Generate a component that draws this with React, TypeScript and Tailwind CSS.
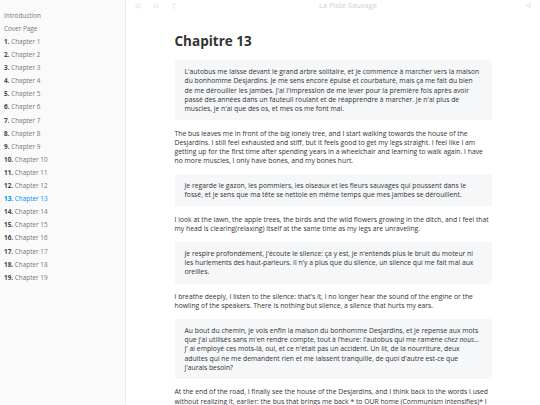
import React from "react";
import { AlignJustify, Search, Type, Share2 } from "lucide-react";

const chapters = Array.from({ length: 19 }, (_, i) => i + 1);
const active = 13;

type Block = { quote: boolean; text: React.ReactNode };

const blocks: Block[] = [
  {
    quote: true,
    text: " L'autobus me laisse devant le grand arbre solitaire, et je commence à marcher vers la maison du bonhomme Desjardins. Je me sens encore épuisé et courbaturé, mais ça me fait du bien de me dérouiller les jambes. J'ai l'impression de me lever pour la première fois après avoir passé des années dans un fauteuil roulant et de réapprendre à marcher. Je n'ai plus de muscles, je n'ai que des os, et mes os me font mal.",
  },
  {
    quote: false,
    text: " The bus leaves me in front of the big lonely tree, and I start walking towards the house of the Desjardins. I still feel exhausted and stiff, but it feels good to get my legs straight. I feel like I am getting up for the first time after spending years in a wheelchair and learning to walk again. I have no more muscles, I only have bones, and my bones hurt.",
  },
  {
    quote: true,
    text: " Je regarde le gazon, les pommiers, les oiseaux et les fleurs sauvages qui poussent dans le fossé, et je sens que ma tête se nettoie en même temps que mes jambes se dérouillent.",
  },
  {
    quote: false,
    text: " I look at the lawn, the apple trees, the birds and the wild flowers growing in the ditch, and I feel that my head is clearing(relaxing) itself at the same time as my legs are unraveling.",
  },
  {
    quote: true,
    text: " Je respire profondément, j'écoute le silence: ça y est, je n'entends plus le bruit du moteur ni les hurlements des haut-parleurs. Il n'y a plus que du silence, un silence qui me fait mal aux oreilles.",
  },
  {
    quote: false,
    text: " I breathe deeply, I listen to the silence: that's it, I no longer hear the sound of the engine or the howling of the speakers. There is nothing but silence, a silence that hurts my ears.",
  },
  {
    quote: true,
    text: (
      <>
        {" Au bout du chemin, je vois enfin la maison du bonhomme Desjardins, et je repense aux mots que j'ai utilisés sans m'en rendre compte, tout à l'heure: l'autobus qui me ramène "}
        <em>chez nous...</em>
        {" J' ai employé ces mots-là, oui, et ce n'était pas un accident. Un lit, de la nourriture, deux adultes qui ne me demandent rien et me laissent tranquille, de quoi d'autre est-ce que j'aurais besoin?"}
      </>
    ),
  },
  {
    quote: false,
    text: " At the end of the road, I finally see the house of the Desjardins, and I think back to the words I used without realizing it, earlier: the bus that brings me back * to OUR home (Communism intensifies)* I used these words, yes, and it was no accident. A bed, food, two adults who ask nothing of me.",
  },
];

export default function App() {
  return (
    <div
      className="flex h-[405px] w-[540px] overflow-hidden bg-white text-[#333]"
      style={{ fontFamily: '"Open Sans", "Noto Sans", sans-serif' }}
    >
      <aside className="w-[126px] shrink-0 border-r border-[#ececec] bg-[#fafafa] pt-[12px]">
        <ul className="flex flex-col">
          <li className="h-[13px] pl-[4px] text-[6.4px] leading-[8px] text-[#777]">Introduction</li>
          <li className="h-[13px] pl-[4px] text-[6.4px] leading-[8px] text-[#777]">Cover Page</li>
          {chapters.map((n) => (
            <li
              key={n}
              className={`h-[13.1px] pl-[4px] text-[6.4px] leading-[8px] ${
                n === active ? "text-[#008cff]" : "text-[#777]"
              }`}
            >
              <b className={n === active ? "" : "text-[#444]"}>{n}.</b> Chapter {n}
            </li>
          ))}
        </ul>
      </aside>

      <main className="flex min-w-0 flex-1 flex-col">
        <header className="flex h-[22px] items-center px-[9px] text-[#d6d6d6]">
          <div className="flex w-[60px] items-center gap-[12px]">
            <AlignJustify className="h-[6px] w-[6px]" strokeWidth={2} />
            <Search className="h-[6px] w-[6px]" strokeWidth={2} />
            <Type className="h-[6px] w-[6px]" strokeWidth={2} />
          </div>
          <div className="flex-1 pl-[30px] text-center text-[7.5px] text-[#cfcfcf]">
            La Piste Sauvage
          </div>
          <div className="flex w-[60px] justify-end">
            <Share2 className="h-[5px] w-[5px]" strokeWidth={2} />
          </div>
        </header>

        <div className="w-[317px] self-center">
          <h1 className="mb-[9px] mt-[20px] text-[13.5px] font-bold leading-[20px] text-[#333]">
            Chapitre 13
          </h1>
          <div className="flex flex-col gap-[8.5px]">
            {blocks.map((b, i) =>
              b.quote ? (
                <p
                  key={i}
                  className="bg-[#f5f7f9] px-[10px] py-[7px] text-[6.8px] leading-[9.2px] text-[#333]"
                >
                  {b.text}
                </p>
              ) : (
                <p key={i} className="text-[6.8px] leading-[9.2px] text-[#333]">
                  {b.text}
                </p>
              )
            )}
          </div>
        </div>
      </main>
    </div>
  );
}
